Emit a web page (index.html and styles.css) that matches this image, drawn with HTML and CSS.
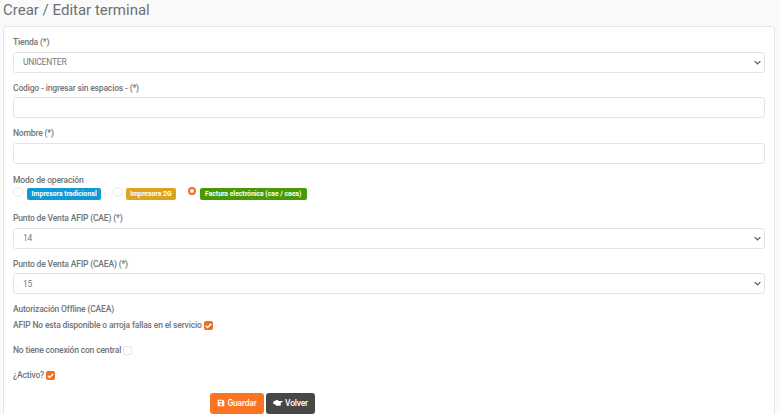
FILE: index.html
```html
<!DOCTYPE html>
<html lang="es">
<head>
<meta charset="utf-8">
<title>Crear / Editar terminal</title>
<link rel="stylesheet" href="styles.css">
</head>
<body>
<h1 class="title">Crear / Editar terminal</h1>
<form class="card">
  <div class="field">
    <label class="label">Tienda (*)</label>
    <div class="control select"><span>UNICENTER</span><svg class="chev" viewBox="0 0 10 6"><path d="M1 1l4 4 4-4"/></svg></div>
  </div>
  <div class="field">
    <label class="label">Codigo - ingresar sin espacios - (*)</label>
    <div class="control"></div>
  </div>
  <div class="field">
    <label class="label">Nombre (*)</label>
    <div class="control"></div>
  </div>
  <div class="field modes">
    <label class="label">Modo de operación</label>
    <div class="radios">
      <span class="radio"></span><span class="badge blue">Impresora tradicional</span>
      <span class="radio second"></span><span class="badge yellow">Impresora 2G</span>
      <span class="radio on third"></span><span class="badge green">Factura electrónica (cae / caea)</span>
    </div>
  </div>
  <div class="field">
    <label class="label">Punto de Venta AFIP (CAE) (*)</label>
    <div class="control select"><span>14</span><svg class="chev" viewBox="0 0 10 6"><path d="M1 1l4 4 4-4"/></svg></div>
  </div>
  <div class="field">
    <label class="label">Punto de Venta AFIP (CAEA) (*)</label>
    <div class="control select"><span>15</span><svg class="chev" viewBox="0 0 10 6"><path d="M1 1l4 4 4-4"/></svg></div>
  </div>
  <div class="label offline">Autorización Offline (CAEA)</div>
  <div class="check first"><span class="label">AFIP No esta disponible o arroja fallas en el servicio</span><span class="box on"><svg viewBox="0 0 10 10"><path d="M2 5.2l2 2 4-4"/></svg></span></div>
  <div class="check"><span class="label">No tiene conexión con central</span><span class="box"></span></div>
  <div class="check"><span class="label">¿Activo?</span><span class="box on"><svg viewBox="0 0 10 10"><path d="M2 5.2l2 2 4-4"/></svg></span></div>
  <div class="actions">
    <button type="button" class="btn save"><svg class="ico" viewBox="0 0 12 12"><path d="M1 2.2C1 1.5 1.5 1 2.2 1h6.6L11 3.2v6.6c0 .7-.5 1.2-1.2 1.2H2.2C1.5 11 1 10.500 1 9.800zM3 2.500v2.500h5V2.500zM6 6.500a1.600 1.600 0 1 0 0 3.200 1.600 1.600 0 0 0 0-3.200z" fill-rule="evenodd"/></svg>Guardar</button>
    <button type="button" class="btn back"><svg class="ico hand" viewBox="0 0 12 10"><path d="M0 3.500l3-1.500 2-1 1.500.5L6 2.500h5c.6 0 1 .3 1 .8s-.4.8-1 .8H9.500v3.400c0 .5-.4.800-.9.800H4.500C3.500 8.300 3 7.500 2.500 6.800L0 6z"/></svg>Volver</button>
  </div>
</form>
</body>
</html>
```
FILE: styles.css
```css
html, body {
  margin: 0;
  height: 414px;
  overflow: hidden;
}
body {
  background: #fafafa;
  padding: 0 5px 0 3px;
  font-family: Roboto, "Liberation Sans", sans-serif;
  color: #707478;
}
.title {
  margin: 0;
  height: 26px;
  font-size: 15px;
  line-height: 20px;
  font-weight: 400;
  color: #6c7075;
}
.card {
  background: #fff;
  border: 1px solid #e6e6e6;
  border-radius: 3px;
  padding: 10px 9px 0;
  height: 400px;
  box-sizing: border-box;
}
.label {
  display: block;
  font-size: 8.500px;
  letter-spacing: -0.16px;
  line-height: 11px;
  font-weight: 500;
  color: #707478;
}
.field {
  margin-bottom: 9.500px;
}
.field .label {
  padding-top: 0.400px;
  margin-bottom: 3.500px;
}
.control {
  height: 21px;
  box-sizing: border-box;
  border: 1px solid #e4e4e4;
  border-radius: 3px;
  background: #fff;
}
.select {
  display: flex;
  align-items: center;
  justify-content: space-between;
  padding: 0 3px 0 9px;
  font-size: 8.500px;
  letter-spacing: -0.2px;
  color: #74787c;
}
.chev {
  width: 7px;
  height: 5px;
  fill: none;
  stroke: #55595d;
  stroke-width: 1.800;
}
.modes {
  margin-bottom: 11.700px;
}
.modes .label {
  padding-top: 1.400px;
  margin-bottom: 1.600px;
}
.radios {
  display: flex;
  align-items: flex-start;
  height: 14px;
}
.radio {
  width: 8px;
  height: 8px;
  margin-right: 4px;
  border: 1px solid #e6e6e6;
  border-radius: 50%;
  background: #fff;
  flex: none;
}
.radio.second {
  margin-left: 12px;
  margin-right: 3px;
}
.radio.third {
  margin-left: 12px;
}
.radio.on {
  border: 2.500px solid #f26c21;
  width: 4px;
  height: 4px;
  margin-right: 4px;
}
.badge {
  margin-top: 1px;
  padding: 0 5.500px;
  height: 12px;
  line-height: 12px;
  border-radius: 2px;
  font-size: 6.800px;
  font-weight: 700;
  color: #fff;
}
.blue {
  padding: 0 4.500px;
  background: #0d9ad6;
}
.yellow {
  padding: 0 4px;
  background: #e0a31c;
}
.green {
  background: #479a05;
}
.offline {
  padding-top: 0.500px;
  margin: 0 0 3.500px;
}
.check {
  display: flex;
  align-items: center;
  gap: 2px;
  height: 14px;
  margin-bottom: 11px;
}
.box {
  width: 9px;
  height: 9px;
  box-sizing: border-box;
  border: 1px solid #e6e6e6;
  border-radius: 2px;
  background: #fff;
  display: block;
}
.box.on {
  background: #f26c21;
  border: 0;
}
.box svg {
  display: block;
  width: 9px;
  height: 9px;
  fill: none;
  stroke: #fff;
  stroke-width: 1.600;
}
.actions {
  display: flex;
  justify-content: flex-start;
  gap: 2px;
  margin: -1px 0 0 197px;
}
.btn {
  display: flex;
  align-items: center;
  justify-content: center;
  gap: 2px;
  height: 21px;
  padding: 0;
  border: 1px solid transparent;
  border-radius: 3px;
  font-family: inherit;
  font-size: 8.500px;
  letter-spacing: -0.2px;
  font-weight: 500;
  color: #fff;
}
.save {
  width: 54px;
  background: #f97423;
}
.back {
  width: 49px;
  background: #474747;
}
.ico {
  width: 8px;
  height: 8px;
  fill: #fff;
}
.hand {
  width: 10px;
  height: 8px;
}
```
